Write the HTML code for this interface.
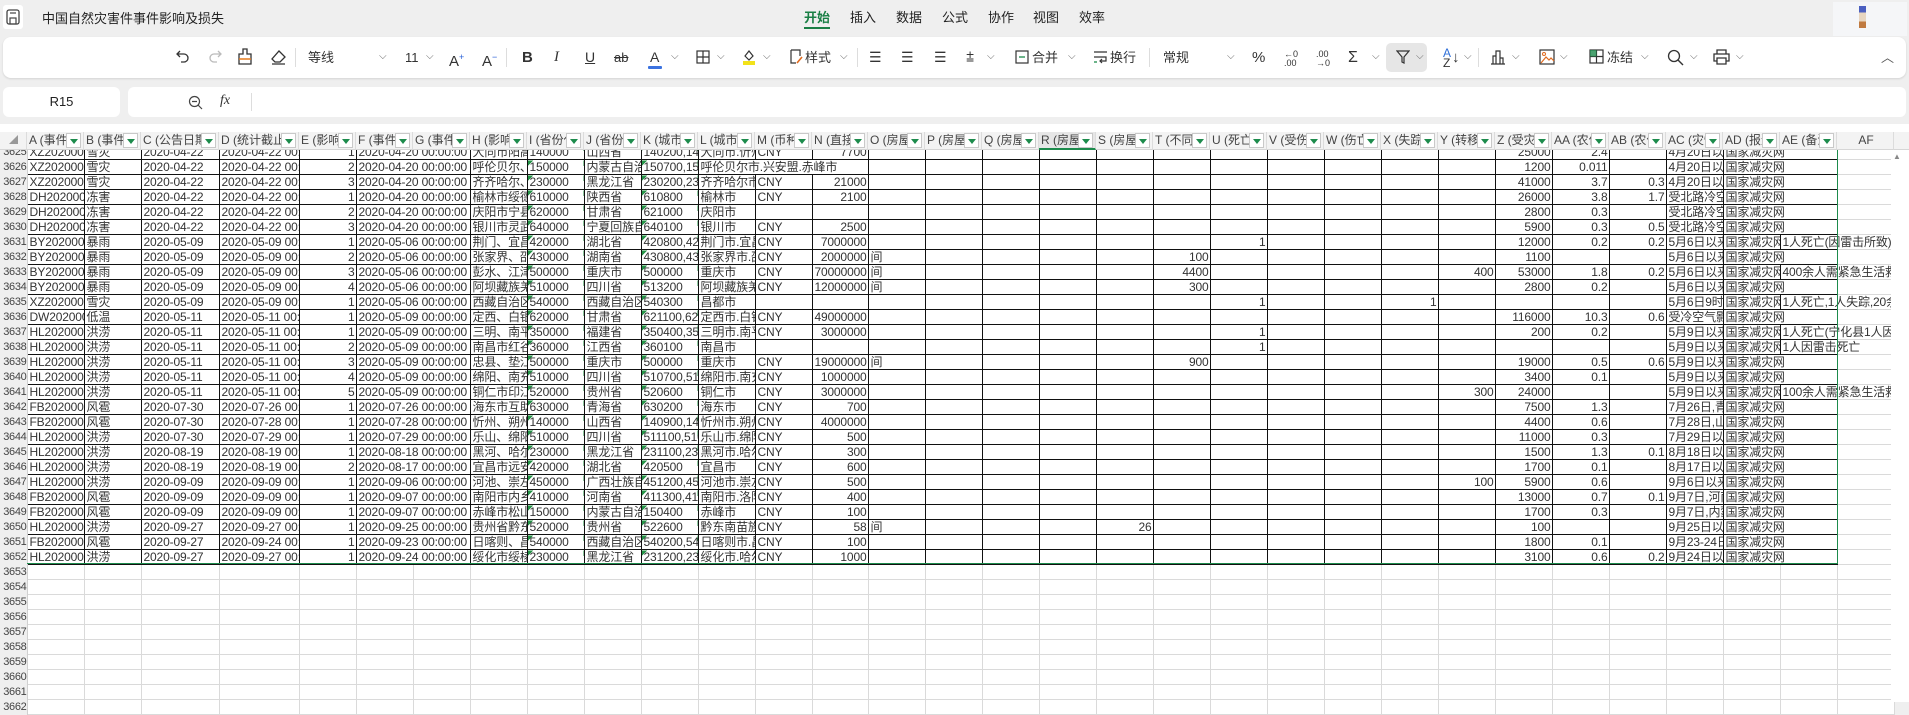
<!DOCTYPE html>
<html><head><meta charset="utf-8">
<style>
*{box-sizing:border-box;margin:0;padding:0}
body{width:1909px;height:702px;overflow:hidden;background:#efefef;font-family:"Liberation Sans","Noto Sans CJK SC",sans-serif;color:#333;position:relative}
.a{position:absolute}
.tb{left:3px;top:37px;width:1903px;height:41px;background:#fff;border-radius:8px;box-shadow:0 1px 2px rgba(0,0,0,.12)}
.ti{position:absolute;top:12px;font-size:14px;line-height:17px;color:#333;white-space:nowrap}
.ch{position:absolute;top:14px;font-size:10px;color:#666}
.sep{position:absolute;top:11px;width:1px;height:19px;background:#ddd}
.hdr{left:0;top:132px;height:18px;display:flex;z-index:5;background:#f3f3f3}
.hdr div{height:18px;border-right:1px solid #dcdcdc;border-bottom:1px solid #d6d6d6;font-size:12px;line-height:17px;padding-left:2px;white-space:nowrap;overflow:hidden;position:relative;color:#444}
.hdr div i{position:absolute;right:2px;top:1px;width:15px;height:15px;background:#fff;border:1px solid #c9c9c9;font-style:normal}
.hdr div i:after{content:"";position:absolute;left:3px;top:5px;border-left:4px solid transparent;border-right:4px solid transparent;border-top:5px solid #1d8b4c}
.grid{left:0;top:144px;z-index:1}
table{border-collapse:collapse;table-layout:fixed;font-size:12px;letter-spacing:-0.15px;width:1894px}
td{height:15px;border:1px solid #111;padding:0 1px 0 2px;white-space:nowrap;overflow:hidden;line-height:13px;color:#333;background:#fff}
td.n{background:#efefef;border:0;border-right:1px solid #d0d0d0;text-align:right;font-size:11px;letter-spacing:-0.3px;padding:0;color:#444}
td.r{text-align:right}
td.t{background:linear-gradient(135deg,#259447 0 4px,#fff 4px)}
td.ov{overflow:visible}
td.f{border-color:#dadada}
tr.e td{border-color:#dadada}
tr.e td.n{border:0;border-right:1px solid #d0d0d0}
</style></head><body>
<div class="a" style="left:3px;top:5px;width:20px;height:24px;background:#fff;border-radius:3px"></div>
<svg class="a" style="left:6px;top:9px" width="14" height="16" viewBox="0 0 14 16"><rect x="1" y="1" width="12" height="14" rx="2" fill="none" stroke="#444" stroke-width="1.3"/><rect x="4" y="9" width="6" height="6" fill="none" stroke="#444" stroke-width="1.2"/><line x1="4" y1="4" x2="10" y2="4" stroke="#444" stroke-width="1.2"/></svg>
<div class="a" style="left:42px;top:8px;font-size:13px;color:#222">中国自然灾害件事件影响及损失</div>
<div class="a" style="left:804px;top:7px;font-size:13px;color:#1a7f45;font-weight:bold">开始</div>
<div class="a" style="left:804px;top:27px;width:26px;height:2px;background:#1a7f45"></div>
<div class="a" style="left:850px;top:7px;font-size:13px;color:#222">插入</div>
<div class="a" style="left:896px;top:7px;font-size:13px;color:#222">数据</div>
<div class="a" style="left:942px;top:7px;font-size:13px;color:#222">公式</div>
<div class="a" style="left:988px;top:7px;font-size:13px;color:#222">协作</div>
<div class="a" style="left:1033px;top:7px;font-size:13px;color:#222">视图</div>
<div class="a" style="left:1079px;top:7px;font-size:13px;color:#222">效率</div>
<div class="a" style="left:1833px;top:2px;width:74px;height:34px;background:#f5f6f8"></div>
<div class="a" style="left:1859px;top:6px;width:7px;height:22px;background:linear-gradient(#4b5fc0 0 30%,#e8d6c0 30% 70%,#c07a40 70%)"></div>
<div class="a tb">
<svg class="a" style="left:172px;top:12px" width="16" height="16" viewBox="0 0 16 16"><path d="M5 2 L2 5 L5 8 M2 5 H9 A4 4 0 0 1 9 13 H6" fill="none" stroke="#333" stroke-width="1.3"/></svg>
<svg class="a" style="left:204px;top:12px" width="16" height="16" viewBox="0 0 16 16"><path d="M11 2 L14 5 L11 8 M14 5 H7 A4 4 0 0 0 7 13 H10" fill="none" stroke="#bbb" stroke-width="1.3"/></svg>
<svg class="a" style="left:234px;top:11px" width="16" height="18" viewBox="0 0 16 18"><path d="M6 1h4v5h4v10H2V6h4z" fill="none" stroke="#333" stroke-width="1.3"/><line x1="2" y1="11" x2="14" y2="11" stroke="#e67a1e" stroke-width="1.5"/></svg>
<svg class="a" style="left:267px;top:12px" width="17" height="16" viewBox="0 0 17 16"><path d="M9 2 L15 8 L10 13 H5 L2 10 Z M2 15 H15" fill="none" stroke="#333" stroke-width="1.3"/></svg>
<div class="sep" style="left:292px"></div>
<div class="ti" style="left:305px;font-size:13px">等线</div><div class="ch" style="left:376px">⌵</div>
<div class="ti" style="left:402px;font-size:13px">11</div><div class="ch" style="left:423px">⌵</div>
<div class="ti" style="left:446px;font-size:15px">A<sup style="font-size:9px;color:#2860d8">+</sup></div>
<div class="ti" style="left:479px;font-size:15px">A<sup style="font-size:9px;color:#2860d8">−</sup></div>
<div class="sep" style="left:503px"></div>
<div class="ti" style="left:519px;font-size:15px;font-weight:bold">B</div>
<div class="ti" style="left:551px;font-size:15px;font-style:italic;font-family:'Liberation Serif',serif">I</div>
<div class="ti" style="left:582px;font-size:14px;text-decoration:underline">U</div>
<div class="ti" style="left:611px;font-size:13px;text-decoration:line-through">ab</div>
<div class="ti" style="left:647px;font-size:14px">A</div><div class="a" style="left:645px;top:29px;width:14px;height:3px;background:#3b72e0;border-radius:1px"></div><div class="ch" style="left:668px">⌵</div>
<svg class="a" style="left:693px;top:13px" width="14" height="14" viewBox="0 0 14 14"><rect x="1" y="1" width="12" height="12" fill="none" stroke="#333" stroke-width="1.2"/><path d="M7 1V13M1 7H13" stroke="#333" stroke-width="1.2"/></svg><div class="ch" style="left:714px">⌵</div>
<svg class="a" style="left:738px;top:11px" width="16" height="18" viewBox="0 0 16 18"><path d="M4 8 L8 3 L12 8 L8 12 Z" fill="none" stroke="#333" stroke-width="1.2"/><rect x="2" y="13" width="12" height="4" fill="#f2e21a"/></svg><div class="ch" style="left:760px">⌵</div>
<svg class="a" style="left:787px;top:12px" width="14" height="16" viewBox="0 0 14 16"><path d="M1 1H10V7M1 1V14H6" fill="none" stroke="#333" stroke-width="1.2"/><path d="M12 8 L7 14" stroke="#e06a1e" stroke-width="1.6"/></svg>
<div class="ti" style="left:802px;font-size:13px">样式</div><div class="ch" style="left:837px">⌵</div>
<div class="sep" style="left:854px"></div>
<div class="ti" style="left:866px;font-size:14px">☰</div>
<div class="ti" style="left:898px;font-size:14px">☰</div>
<div class="ti" style="left:931px;font-size:14px">☰</div>
<div class="ti" style="left:963px;font-size:14px">⩲</div><div class="ch" style="left:984px">⌵</div>
<svg class="a" style="left:1012px;top:13px" width="14" height="14" viewBox="0 0 14 14"><rect x="1" y="1" width="12" height="12" fill="none" stroke="#333" stroke-width="1.2"/><path d="M4 7H10" stroke="#1d8b4c" stroke-width="1.3"/></svg>
<div class="ti" style="left:1029px;font-size:13px">合并</div><div class="ch" style="left:1065px">⌵</div>
<svg class="a" style="left:1090px;top:13px" width="16" height="14" viewBox="0 0 16 14"><path d="M1 2H14M1 7H13V11H7M9 9L7 11L9 13" fill="none" stroke="#333" stroke-width="1.2"/><path d="M1 12H4" stroke="#1d8b4c" stroke-width="1.3"/></svg>
<div class="ti" style="left:1107px;font-size:13px">换行</div>
<div class="sep" style="left:1146px"></div>
<div class="ti" style="left:1160px;font-size:13px">常规</div><div class="ch" style="left:1224px">⌵</div>
<div class="ti" style="left:1249px;font-size:15px">%</div>
<div class="ti" style="left:1281px;font-size:9px;line-height:9px;top:13px">←0<br>.00</div>
<div class="ti" style="left:1313px;font-size:9px;line-height:9px;top:13px">.00<br>→0</div>
<div class="ti" style="left:1345px;font-size:16px">Σ</div><div class="ch" style="left:1369px">⌵</div>
<div class="a" style="left:1383px;top:6px;width:41px;height:29px;background:#e6e6e6;border-radius:5px"></div>
<svg class="a" style="left:1393px;top:13px" width="14" height="14" viewBox="0 0 14 14"><path d="M1 1H13L8 7V13L6 12V7Z" fill="none" stroke="#333" stroke-width="1.2"/></svg><div class="ch" style="left:1413px">⌵</div>
<div class="ti" style="left:1440px;font-size:12px;line-height:10px;top:11px"><span style="color:#2e6fd8">A</span><br>Z</div><div class="ti" style="left:1449px;font-size:15px">↓</div><div class="ch" style="left:1461px">⌵</div>
<div class="sep" style="left:1475px"></div>
<svg class="a" style="left:1487px;top:12px" width="16" height="16" viewBox="0 0 16 16"><path d="M1 15H15M3 15V7H6V15M6 15V2H10V15M10 15V9H13V15" fill="none" stroke="#333" stroke-width="1.2"/></svg><div class="ch" style="left:1509px">⌵</div>
<svg class="a" style="left:1536px;top:12px" width="16" height="16" viewBox="0 0 16 16"><rect x="1" y="1" width="14" height="14" fill="none" stroke="#333" stroke-width="1.2"/><circle cx="5" cy="5" r="1.5" fill="none" stroke="#e06a1e"/><path d="M2 14L7 8L10 11L12 9L15 12" fill="none" stroke="#e06a1e" stroke-width="1.2"/></svg><div class="ch" style="left:1557px">⌵</div>
<svg class="a" style="left:1586px;top:12px" width="15" height="15" viewBox="0 0 15 15"><rect x="1" y="1" width="13" height="13" fill="none" stroke="#333" stroke-width="1.2"/><path d="M7.5 1V14M1 7.5H14" stroke="#333" stroke-width="1.2"/><rect x="1" y="1" width="6.5" height="6.5" fill="#1d8b4c" opacity=".8"/></svg>
<div class="ti" style="left:1604px;font-size:13px">冻结</div><div class="ch" style="left:1638px">⌵</div>
<svg class="a" style="left:1664px;top:12px" width="17" height="17" viewBox="0 0 17 17"><circle cx="7" cy="7" r="5.5" fill="none" stroke="#333" stroke-width="1.3"/><path d="M11 11L16 16" stroke="#333" stroke-width="1.4"/></svg><div class="ch" style="left:1687px">⌵</div>
<svg class="a" style="left:1710px;top:12px" width="17" height="16" viewBox="0 0 17 16"><path d="M4 5V1H13V5M4 12H1V5H16V12H13M4 9H13V15H4Z" fill="none" stroke="#333" stroke-width="1.3"/></svg><div class="ch" style="left:1733px">⌵</div>
<div class="ti" style="left:1878px;font-size:13px;color:#555">︿</div>
</div>
<div class="a" style="left:3px;top:87px;width:117px;height:30px;background:#fff;border-radius:6px;font-size:13px;line-height:30px;text-align:center;color:#222">R15</div>
<div class="a" style="left:128px;top:87px;width:1778px;height:30px;background:#fff;border-radius:6px"></div>
<svg class="a" style="left:188px;top:95px" width="15" height="15" viewBox="0 0 15 15"><circle cx="6.5" cy="6.5" r="5" fill="none" stroke="#444" stroke-width="1.2"/><path d="M4 6.5H9M10 10L14 14" stroke="#444" stroke-width="1.2"/></svg>
<div class="a" style="left:220px;top:93px;font-size:14px;font-style:italic;font-family:'Liberation Serif',serif;color:#333">fx</div>
<div class="a" style="left:251px;top:93px;width:1px;height:18px;background:#ddd"></div>
<div class="a" style="left:0;top:124px;width:1909px;height:578px;background:#fff"></div>
<div class="a hdr">
<div style="width:27px;color:#999;font-size:9px;padding-left:9px">◢</div>
<div style="width:57px">A (事件<i></i></div><div style="width:57px">B (事件<i></i></div><div style="width:78px">C (公告日期<i></i></div><div style="width:80px">D (统计截止<i></i></div><div style="width:57px">E (影响<i></i></div><div style="width:57px">F (事件<i></i></div><div style="width:57px">G (事件<i></i></div><div style="width:57px">H (影响<i></i></div><div style="width:57px">I (省份代<i></i></div><div style="width:57px">J (省份<i></i></div><div style="width:57px">K (城市<i></i></div><div style="width:57px">L (城市<i></i></div><div style="width:57px">M (币种<i></i></div><div style="width:56px">N (直接<i></i></div><div style="width:57px">O (房屋<i></i></div><div style="width:57px">P (房屋<i></i></div><div style="width:57px">Q (房屋<i></i></div><div style="width:57px;background:#e6e6e6;border-bottom:2px solid #1d8b4c">R (房屋<i></i></div><div style="width:57px">S (房屋<i></i></div><div style="width:57px">T (不同<i></i></div><div style="width:57px">U (死亡<i></i></div><div style="width:57px">V (受伤<i></i></div><div style="width:57px">W (伤亡<i></i></div><div style="width:57px">X (失踪<i></i></div><div style="width:57px">Y (转移<i></i></div><div style="width:57px">Z (受灾<i></i></div><div style="width:57px">AA (农作<i></i></div><div style="width:57px">AB (农作<i></i></div><div style="width:57px">AC (灾情<i></i></div><div style="width:57px">AD (报道<i></i></div><div style="width:57px">AE (备注<i></i></div><div style="width:57px;text-align:center">AF</div><div style="width:15px;border-right:0"></div>
</div>
<div class="a grid">
<table>
<colgroup><col style="width:27px"><col style="width:57px"><col style="width:57px"><col style="width:78px"><col style="width:80px"><col style="width:57px"><col style="width:57px"><col style="width:57px"><col style="width:57px"><col style="width:57px"><col style="width:57px"><col style="width:57px"><col style="width:57px"><col style="width:57px"><col style="width:56px"><col style="width:57px"><col style="width:57px"><col style="width:57px"><col style="width:57px"><col style="width:57px"><col style="width:57px"><col style="width:57px"><col style="width:57px"><col style="width:57px"><col style="width:57px"><col style="width:57px"><col style="width:57px"><col style="width:57px"><col style="width:57px"><col style="width:57px"><col style="width:57px"><col style="width:57px"><col style="width:57px"></colgroup>
<tr><td class="n">3625</td><td>XZ20200001</td><td>雪灾</td><td>2020-04-22</td><td>2020-04-22 00:00</td><td class="r">1</td><td colspan="2">2020-04-20 00:00:00</td><td>大同市阳高县</td><td class="t">140000</td><td>山西省</td><td class="t">140200,140900</td><td>大同市.忻州市</td><td>CNY</td><td class="r">7700</td><td></td><td></td><td></td><td></td><td></td><td></td><td></td><td></td><td></td><td></td><td></td><td class="r">25000</td><td class="r">2.4</td><td></td><td>4月20日以来</td><td colspan="2">国家减灾网</td><td class="f"></td></tr>
<tr><td class="n">3626</td><td>XZ20200002</td><td>雪灾</td><td>2020-04-22</td><td>2020-04-22 00:00</td><td class="r">2</td><td colspan="2">2020-04-20 00:00:00</td><td>呼伦贝尔、兴安</td><td class="t">150000</td><td>内蒙古自治区</td><td class="t">150700,152200</td><td colspan="3">呼伦贝尔市.兴安盟.赤峰市</td><td></td><td></td><td></td><td></td><td></td><td></td><td></td><td></td><td></td><td></td><td></td><td class="r">1200</td><td class="r">0.011</td><td></td><td>4月20日以来</td><td colspan="2">国家减灾网</td><td class="f"></td></tr>
<tr><td class="n">3627</td><td>XZ20200003</td><td>雪灾</td><td>2020-04-22</td><td>2020-04-22 00:00</td><td class="r">3</td><td colspan="2">2020-04-20 00:00:00</td><td>齐齐哈尔、黑河</td><td class="t">230000</td><td>黑龙江省</td><td class="t">230200,231100</td><td>齐齐哈尔市</td><td>CNY</td><td class="r">21000</td><td></td><td></td><td></td><td></td><td></td><td></td><td></td><td></td><td></td><td></td><td></td><td class="r">41000</td><td class="r">3.7</td><td class="r">0.3</td><td>4月20日以来</td><td colspan="2">国家减灾网</td><td class="f"></td></tr>
<tr><td class="n">3628</td><td>DH20200001</td><td>冻害</td><td>2020-04-22</td><td>2020-04-22 00:00</td><td class="r">1</td><td colspan="2">2020-04-20 00:00:00</td><td>榆林市绥德县</td><td class="t">610000</td><td>陕西省</td><td class="t">610800</td><td>榆林市</td><td>CNY</td><td class="r">2100</td><td></td><td></td><td></td><td></td><td></td><td></td><td></td><td></td><td></td><td></td><td></td><td class="r">26000</td><td class="r">3.8</td><td class="r">1.7</td><td>受北路冷空气</td><td colspan="2">国家减灾网</td><td class="f"></td></tr>
<tr><td class="n">3629</td><td>DH20200002</td><td>冻害</td><td>2020-04-22</td><td>2020-04-22 00:00</td><td class="r">2</td><td colspan="2">2020-04-20 00:00:00</td><td>庆阳市宁县</td><td class="t">620000</td><td>甘肃省</td><td class="t">621000</td><td>庆阳市</td><td></td><td></td><td></td><td></td><td></td><td></td><td></td><td></td><td></td><td></td><td></td><td></td><td></td><td class="r">2800</td><td class="r">0.3</td><td></td><td>受北路冷空气</td><td colspan="2">国家减灾网</td><td class="f"></td></tr>
<tr><td class="n">3630</td><td>DH20200003</td><td>冻害</td><td>2020-04-22</td><td>2020-04-22 00:00</td><td class="r">3</td><td colspan="2">2020-04-20 00:00:00</td><td>银川市灵武市</td><td class="t">640000</td><td>宁夏回族自治区</td><td class="t">640100</td><td>银川市</td><td>CNY</td><td class="r">2500</td><td></td><td></td><td></td><td></td><td></td><td></td><td></td><td></td><td></td><td></td><td></td><td class="r">5900</td><td class="r">0.3</td><td class="r">0.5</td><td>受北路冷空气</td><td colspan="2">国家减灾网</td><td class="f"></td></tr>
<tr><td class="n">3631</td><td>BY20200001</td><td>暴雨</td><td>2020-05-09</td><td>2020-05-09 00:00</td><td class="r">1</td><td colspan="2">2020-05-06 00:00:00</td><td>荆门、宜昌</td><td class="t">420000</td><td>湖北省</td><td class="t">420800,420500</td><td>荆门市.宜昌市</td><td>CNY</td><td class="r">7000000</td><td></td><td></td><td></td><td></td><td></td><td></td><td class="r">1</td><td></td><td></td><td></td><td></td><td class="r">12000</td><td class="r">0.2</td><td class="r">0.2</td><td>5月6日以来</td><td>国家减灾网</td><td class="ov">1人死亡(因雷击所致)</td><td class="f"></td></tr>
<tr><td class="n">3632</td><td>BY20200002</td><td>暴雨</td><td>2020-05-09</td><td>2020-05-09 00:00</td><td class="r">2</td><td colspan="2">2020-05-06 00:00:00</td><td>张家界、邵阳</td><td class="t">430000</td><td>湖南省</td><td class="t">430800,430500</td><td>张家界市.邵阳市</td><td>CNY</td><td class="r">2000000</td><td>间</td><td></td><td></td><td></td><td></td><td class="r">100</td><td></td><td></td><td></td><td></td><td></td><td class="r">1100</td><td></td><td></td><td>5月6日以来</td><td colspan="2">国家减灾网</td><td class="f"></td></tr>
<tr><td class="n">3633</td><td>BY20200003</td><td>暴雨</td><td>2020-05-09</td><td>2020-05-09 00:00</td><td class="r">3</td><td colspan="2">2020-05-06 00:00:00</td><td>彭水、江津</td><td class="t">500000</td><td>重庆市</td><td class="t">500000</td><td>重庆市</td><td>CNY</td><td class="r">70000000</td><td>间</td><td></td><td></td><td></td><td></td><td class="r">4400</td><td></td><td></td><td></td><td></td><td class="r">400</td><td class="r">53000</td><td class="r">1.8</td><td class="r">0.2</td><td>5月6日以来</td><td>国家减灾网</td><td class="ov">400余人需紧急生活救助</td><td class="f"></td></tr>
<tr><td class="n">3634</td><td>BY20200004</td><td>暴雨</td><td>2020-05-09</td><td>2020-05-09 00:00</td><td class="r">4</td><td colspan="2">2020-05-06 00:00:00</td><td>阿坝藏族羌族</td><td class="t">510000</td><td>四川省</td><td class="t">513200</td><td>阿坝藏族羌族</td><td>CNY</td><td class="r">12000000</td><td>间</td><td></td><td></td><td></td><td></td><td class="r">300</td><td></td><td></td><td></td><td></td><td></td><td class="r">2800</td><td class="r">0.2</td><td></td><td>5月6日以来</td><td colspan="2">国家减灾网</td><td class="f"></td></tr>
<tr><td class="n">3635</td><td>XZ20200004</td><td>雪灾</td><td>2020-05-09</td><td>2020-05-09 00:00</td><td class="r">1</td><td colspan="2">2020-05-06 00:00:00</td><td>西藏自治区</td><td class="t">540000</td><td>西藏自治区</td><td class="t">540300</td><td>昌都市</td><td></td><td></td><td></td><td></td><td></td><td></td><td></td><td></td><td class="r">1</td><td></td><td></td><td class="r">1</td><td></td><td></td><td></td><td></td><td>5月6日9时</td><td>国家减灾网</td><td class="ov">1人死亡,1人失踪,20余</td><td class="f"></td></tr>
<tr><td class="n">3636</td><td>DW20200001</td><td>低温</td><td>2020-05-11</td><td>2020-05-11 00:00</td><td class="r">1</td><td colspan="2">2020-05-09 00:00:00</td><td>定西、白银</td><td class="t">620000</td><td>甘肃省</td><td class="t">621100,620400</td><td>定西市.白银市</td><td>CNY</td><td class="r">49000000</td><td></td><td></td><td></td><td></td><td></td><td></td><td></td><td></td><td></td><td></td><td></td><td class="r">116000</td><td class="r">10.3</td><td class="r">0.6</td><td>受冷空气影响</td><td colspan="2">国家减灾网</td><td class="f"></td></tr>
<tr><td class="n">3637</td><td>HL20200001</td><td>洪涝</td><td>2020-05-11</td><td>2020-05-11 00:00</td><td class="r">1</td><td colspan="2">2020-05-09 00:00:00</td><td>三明、南平</td><td class="t">350000</td><td>福建省</td><td class="t">350400,350700</td><td>三明市.南平市</td><td>CNY</td><td class="r">3000000</td><td></td><td></td><td></td><td></td><td></td><td></td><td class="r">1</td><td></td><td></td><td></td><td></td><td class="r">200</td><td class="r">0.2</td><td></td><td>5月9日以来</td><td>国家减灾网</td><td class="ov">1人死亡(宁化县1人因</td><td class="f"></td></tr>
<tr><td class="n">3638</td><td>HL20200002</td><td>洪涝</td><td>2020-05-11</td><td>2020-05-11 00:00</td><td class="r">2</td><td colspan="2">2020-05-09 00:00:00</td><td>南昌市红谷滩</td><td class="t">360000</td><td>江西省</td><td class="t">360100</td><td>南昌市</td><td></td><td></td><td></td><td></td><td></td><td></td><td></td><td></td><td class="r">1</td><td></td><td></td><td></td><td></td><td></td><td></td><td></td><td>5月9日以来</td><td>国家减灾网</td><td class="ov">1人因雷击死亡</td><td class="f"></td></tr>
<tr><td class="n">3639</td><td>HL20200003</td><td>洪涝</td><td>2020-05-11</td><td>2020-05-11 00:00</td><td class="r">3</td><td colspan="2">2020-05-09 00:00:00</td><td>忠县、垫江</td><td class="t">500000</td><td>重庆市</td><td class="t">500000</td><td>重庆市</td><td>CNY</td><td class="r">19000000</td><td>间</td><td></td><td></td><td></td><td></td><td class="r">900</td><td></td><td></td><td></td><td></td><td></td><td class="r">19000</td><td class="r">0.5</td><td class="r">0.6</td><td>5月9日以来</td><td colspan="2">国家减灾网</td><td class="f"></td></tr>
<tr><td class="n">3640</td><td>HL20200004</td><td>洪涝</td><td>2020-05-11</td><td>2020-05-11 00:00</td><td class="r">4</td><td colspan="2">2020-05-09 00:00:00</td><td>绵阳、南充</td><td class="t">510000</td><td>四川省</td><td class="t">510700,511300</td><td>绵阳市.南充市</td><td>CNY</td><td class="r">1000000</td><td></td><td></td><td></td><td></td><td></td><td></td><td></td><td></td><td></td><td></td><td></td><td class="r">3400</td><td class="r">0.1</td><td></td><td>5月9日以来</td><td colspan="2">国家减灾网</td><td class="f"></td></tr>
<tr><td class="n">3641</td><td>HL20200005</td><td>洪涝</td><td>2020-05-11</td><td>2020-05-11 00:00</td><td class="r">5</td><td colspan="2">2020-05-09 00:00:00</td><td>铜仁市印江县</td><td class="t">520000</td><td>贵州省</td><td class="t">520600</td><td>铜仁市</td><td>CNY</td><td class="r">3000000</td><td></td><td></td><td></td><td></td><td></td><td></td><td></td><td></td><td></td><td></td><td class="r">300</td><td class="r">24000</td><td></td><td></td><td>5月9日以来</td><td>国家减灾网</td><td class="ov">100余人需紧急生活救助</td><td class="f"></td></tr>
<tr><td class="n">3642</td><td>FB20200001</td><td>风雹</td><td>2020-07-30</td><td>2020-07-26 00:00</td><td class="r">1</td><td colspan="2">2020-07-26 00:00:00</td><td>海东市互助县</td><td class="t">630000</td><td>青海省</td><td class="t">630200</td><td>海东市</td><td>CNY</td><td class="r">700</td><td></td><td></td><td></td><td></td><td></td><td></td><td></td><td></td><td></td><td></td><td></td><td class="r">7500</td><td class="r">1.3</td><td></td><td>7月26日,青海</td><td colspan="2">国家减灾网</td><td class="f"></td></tr>
<tr><td class="n">3643</td><td>FB20200002</td><td>风雹</td><td>2020-07-30</td><td>2020-07-28 00:00</td><td class="r">1</td><td colspan="2">2020-07-28 00:00:00</td><td>忻州、朔州</td><td class="t">140000</td><td>山西省</td><td class="t">140900,140600</td><td>忻州市.朔州市</td><td>CNY</td><td class="r">4000000</td><td></td><td></td><td></td><td></td><td></td><td></td><td></td><td></td><td></td><td></td><td></td><td class="r">4400</td><td class="r">0.6</td><td></td><td>7月28日,山西</td><td colspan="2">国家减灾网</td><td class="f"></td></tr>
<tr><td class="n">3644</td><td>HL20200006</td><td>洪涝</td><td>2020-07-30</td><td>2020-07-29 00:00</td><td class="r">1</td><td colspan="2">2020-07-29 00:00:00</td><td>乐山、绵阳</td><td class="t">510000</td><td>四川省</td><td class="t">511100,510700</td><td>乐山市.绵阳市</td><td>CNY</td><td class="r">500</td><td></td><td></td><td></td><td></td><td></td><td></td><td></td><td></td><td></td><td></td><td></td><td class="r">11000</td><td class="r">0.3</td><td></td><td>7月29日以来</td><td colspan="2">国家减灾网</td><td class="f"></td></tr>
<tr><td class="n">3645</td><td>HL20200007</td><td>洪涝</td><td>2020-08-19</td><td>2020-08-19 00:00</td><td class="r">1</td><td colspan="2">2020-08-18 00:00:00</td><td>黑河、哈尔滨</td><td class="t">230000</td><td>黑龙江省</td><td class="t">231100,230100</td><td>黑河市.哈尔滨</td><td>CNY</td><td class="r">300</td><td></td><td></td><td></td><td></td><td></td><td></td><td></td><td></td><td></td><td></td><td></td><td class="r">1500</td><td class="r">1.3</td><td class="r">0.1</td><td>8月18日以来</td><td colspan="2">国家减灾网</td><td class="f"></td></tr>
<tr><td class="n">3646</td><td>HL20200008</td><td>洪涝</td><td>2020-08-19</td><td>2020-08-19 00:00</td><td class="r">2</td><td colspan="2">2020-08-17 00:00:00</td><td>宜昌市远安县</td><td class="t">420000</td><td>湖北省</td><td class="t">420500</td><td>宜昌市</td><td>CNY</td><td class="r">600</td><td></td><td></td><td></td><td></td><td></td><td></td><td></td><td></td><td></td><td></td><td></td><td class="r">1700</td><td class="r">0.1</td><td></td><td>8月17日以来</td><td colspan="2">国家减灾网</td><td class="f"></td></tr>
<tr><td class="n">3647</td><td>HL20200009</td><td>洪涝</td><td>2020-09-09</td><td>2020-09-09 00:00</td><td class="r">1</td><td colspan="2">2020-09-06 00:00:00</td><td>河池、崇左</td><td class="t">450000</td><td>广西壮族自治区</td><td class="t">451200,451400</td><td>河池市.崇左市</td><td>CNY</td><td class="r">500</td><td></td><td></td><td></td><td></td><td></td><td></td><td></td><td></td><td></td><td></td><td class="r">100</td><td class="r">5900</td><td class="r">0.6</td><td></td><td>9月6日以来</td><td colspan="2">国家减灾网</td><td class="f"></td></tr>
<tr><td class="n">3648</td><td>FB20200003</td><td>风雹</td><td>2020-09-09</td><td>2020-09-09 00:00</td><td class="r">1</td><td colspan="2">2020-09-07 00:00:00</td><td>南阳市内乡县</td><td class="t">410000</td><td>河南省</td><td class="t">411300,410300</td><td>南阳市.洛阳市</td><td>CNY</td><td class="r">400</td><td></td><td></td><td></td><td></td><td></td><td></td><td></td><td></td><td></td><td></td><td></td><td class="r">13000</td><td class="r">0.7</td><td class="r">0.1</td><td>9月7日,河南</td><td colspan="2">国家减灾网</td><td class="f"></td></tr>
<tr><td class="n">3649</td><td>FB20200004</td><td>风雹</td><td>2020-09-09</td><td>2020-09-09 00:00</td><td class="r">1</td><td colspan="2">2020-09-07 00:00:00</td><td>赤峰市松山区</td><td class="t">150000</td><td>内蒙古自治区</td><td class="t">150400</td><td>赤峰市</td><td>CNY</td><td class="r">100</td><td></td><td></td><td></td><td></td><td></td><td></td><td></td><td></td><td></td><td></td><td></td><td class="r">1700</td><td class="r">0.3</td><td></td><td>9月7日,内蒙古</td><td colspan="2">国家减灾网</td><td class="f"></td></tr>
<tr><td class="n">3650</td><td>HL20200010</td><td>洪涝</td><td>2020-09-27</td><td>2020-09-27 00:00</td><td class="r">1</td><td colspan="2">2020-09-25 00:00:00</td><td>贵州省黔东南</td><td class="t">520000</td><td>贵州省</td><td class="t">522600</td><td>黔东南苗族侗</td><td>CNY</td><td class="r">58</td><td>间</td><td></td><td></td><td></td><td class="r">26</td><td></td><td></td><td></td><td></td><td></td><td></td><td class="r">100</td><td></td><td></td><td>9月25日以来</td><td colspan="2">国家减灾网</td><td class="f"></td></tr>
<tr><td class="n">3651</td><td>FB20200005</td><td>风雹</td><td>2020-09-27</td><td>2020-09-24 00:00</td><td class="r">1</td><td colspan="2">2020-09-23 00:00:00</td><td>日喀则、昌都</td><td class="t">540000</td><td>西藏自治区</td><td class="t">540200,540300</td><td>日喀则市.昌都</td><td>CNY</td><td class="r">100</td><td></td><td></td><td></td><td></td><td></td><td></td><td></td><td></td><td></td><td></td><td></td><td class="r">1800</td><td class="r">0.1</td><td></td><td>9月23-24日</td><td colspan="2">国家减灾网</td><td class="f"></td></tr>
<tr><td class="n">3652</td><td>HL20200011</td><td>洪涝</td><td>2020-09-27</td><td>2020-09-27 00:00</td><td class="r">1</td><td colspan="2">2020-09-24 00:00:00</td><td>绥化市绥棱县</td><td class="t">230000</td><td>黑龙江省</td><td class="t">231200,230100</td><td>绥化市.哈尔滨</td><td>CNY</td><td class="r">1000</td><td></td><td></td><td></td><td></td><td></td><td></td><td></td><td></td><td></td><td></td><td></td><td class="r">3100</td><td class="r">0.6</td><td class="r">0.2</td><td>9月24日以来</td><td colspan="2">国家减灾网</td><td class="f"></td></tr>
<tr class="e"><td class="n">3653</td><td></td><td></td><td></td><td></td><td></td><td></td><td></td><td></td><td></td><td></td><td></td><td></td><td></td><td></td><td></td><td></td><td></td><td></td><td></td><td></td><td></td><td></td><td></td><td></td><td></td><td></td><td></td><td></td><td></td><td></td><td></td><td></td></tr>
<tr class="e"><td class="n">3654</td><td></td><td></td><td></td><td></td><td></td><td></td><td></td><td></td><td></td><td></td><td></td><td></td><td></td><td></td><td></td><td></td><td></td><td></td><td></td><td></td><td></td><td></td><td></td><td></td><td></td><td></td><td></td><td></td><td></td><td></td><td></td><td></td></tr>
<tr class="e"><td class="n">3655</td><td></td><td></td><td></td><td></td><td></td><td></td><td></td><td></td><td></td><td></td><td></td><td></td><td></td><td></td><td></td><td></td><td></td><td></td><td></td><td></td><td></td><td></td><td></td><td></td><td></td><td></td><td></td><td></td><td></td><td></td><td></td><td></td></tr>
<tr class="e"><td class="n">3656</td><td></td><td></td><td></td><td></td><td></td><td></td><td></td><td></td><td></td><td></td><td></td><td></td><td></td><td></td><td></td><td></td><td></td><td></td><td></td><td></td><td></td><td></td><td></td><td></td><td></td><td></td><td></td><td></td><td></td><td></td><td></td><td></td></tr>
<tr class="e"><td class="n">3657</td><td></td><td></td><td></td><td></td><td></td><td></td><td></td><td></td><td></td><td></td><td></td><td></td><td></td><td></td><td></td><td></td><td></td><td></td><td></td><td></td><td></td><td></td><td></td><td></td><td></td><td></td><td></td><td></td><td></td><td></td><td></td><td></td></tr>
<tr class="e"><td class="n">3658</td><td></td><td></td><td></td><td></td><td></td><td></td><td></td><td></td><td></td><td></td><td></td><td></td><td></td><td></td><td></td><td></td><td></td><td></td><td></td><td></td><td></td><td></td><td></td><td></td><td></td><td></td><td></td><td></td><td></td><td></td><td></td><td></td></tr>
<tr class="e"><td class="n">3659</td><td></td><td></td><td></td><td></td><td></td><td></td><td></td><td></td><td></td><td></td><td></td><td></td><td></td><td></td><td></td><td></td><td></td><td></td><td></td><td></td><td></td><td></td><td></td><td></td><td></td><td></td><td></td><td></td><td></td><td></td><td></td><td></td></tr>
<tr class="e"><td class="n">3660</td><td></td><td></td><td></td><td></td><td></td><td></td><td></td><td></td><td></td><td></td><td></td><td></td><td></td><td></td><td></td><td></td><td></td><td></td><td></td><td></td><td></td><td></td><td></td><td></td><td></td><td></td><td></td><td></td><td></td><td></td><td></td><td></td></tr>
<tr class="e"><td class="n">3661</td><td></td><td></td><td></td><td></td><td></td><td></td><td></td><td></td><td></td><td></td><td></td><td></td><td></td><td></td><td></td><td></td><td></td><td></td><td></td><td></td><td></td><td></td><td></td><td></td><td></td><td></td><td></td><td></td><td></td><td></td><td></td><td></td></tr>
<tr class="e"><td class="n">3662</td><td></td><td></td><td></td><td></td><td></td><td></td><td></td><td></td><td></td><td></td><td></td><td></td><td></td><td></td><td></td><td></td><td></td><td></td><td></td><td></td><td></td><td></td><td></td><td></td><td></td><td></td><td></td><td></td><td></td><td></td><td></td><td></td></tr>
</table>
</div>
<div class="a" style="left:1837px;top:150px;width:1px;height:414px;background:#1d8b4c;z-index:3"></div>
<div class="a" style="left:27px;top:563px;width:1811px;height:1px;background:#1d8b4c;z-index:3"></div>
<div class="a" style="left:1891px;top:150px;width:18px;height:552px;background:#fff;z-index:4"></div>
<div class="a" style="left:1893px;top:152px;font-size:8px;color:#888;z-index:5">▲</div>
</body></html>
